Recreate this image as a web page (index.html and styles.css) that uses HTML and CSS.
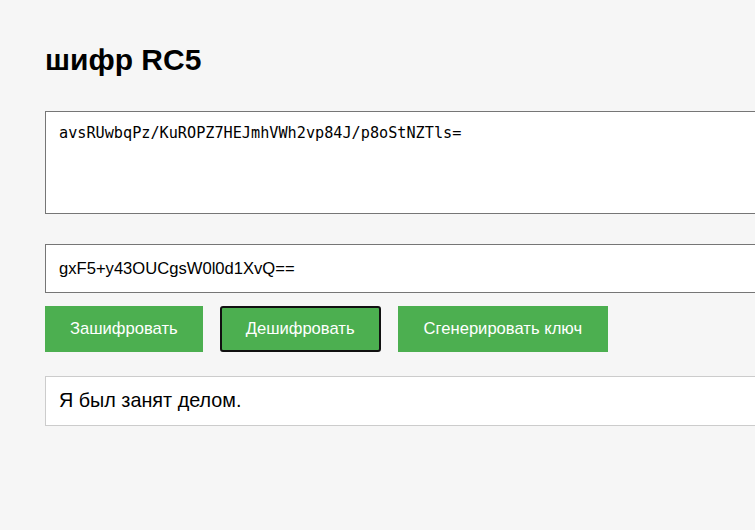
FILE: index.html
```html
<!DOCTYPE html>
<html lang="ru">
<head>
<meta charset="utf-8">
<title>шифр RC5</title>
<link rel="stylesheet" href="styles.css">
</head>
<body>
<main class="page">
  <h1 class="title">шифр RC5</h1>
  <textarea class="message">avsRUwbqPz/KuROPZ7HEJmhVWh2vp84J/p8oStNZTls=</textarea>
  <input class="key" type="text" value="gxF5+y43OUCgsW0l0d1XvQ==">
  <div class="actions">
    <button class="btn">Зашифровать</button>
    <button class="btn btn-focused">Дешифровать</button>
    <button class="btn btn-wide">Сгенерировать ключ</button>
  </div>
  <div class="result">Я был занят делом.</div>
</main>
</body>
</html>
```
FILE: styles.css
```css
html, body {
  margin: 0;
  padding: 0;
  background: #f6f6f6;
  overflow: hidden;
}
body {
  font-family: "Liberation Sans", Arial, sans-serif;
  color: #000;
}
.page {
  width: 800px;
  padding: 20px 0 0 45px;
  display: flex;
  flex-direction: column;
}
.title {
  font-size: 30px;
  font-weight: bold;
  margin: 24px 0 35px 0;
  line-height: 32px;
}
.message {
  box-sizing: border-box;
  width: 800px;
  height: 103px;
  border: 1px solid #767676;
  background: #fff;
  font-family: "DejaVu Sans Mono", "Liberation Mono", monospace;
  font-size: 15.2px;
  padding: 12px 13px;
  resize: none;
  margin: 0 0 30px 0;
  outline: none;
}
.key {
  box-sizing: border-box;
  width: 800px;
  height: 49px;
  border: 1px solid #767676;
  background: #fff;
  font-family: "Liberation Sans", Arial, sans-serif;
  font-size: 16.6px;
  padding: 0 13px;
  margin: 0 0 13px 0;
  outline: none;
}
.actions {
  display: flex;
  gap: 17px;
  margin-bottom: 24px;
}
.btn {
  box-sizing: border-box;
  height: 46px;
  background: #4caf50;
  color: #fff;
  border: none;
  font-family: "Liberation Sans", Arial, sans-serif;
  font-size: 16.6px;
  padding: 0 25px;
}
.btn-focused {
  border: 2px solid #111;
  border-radius: 3px;
  padding: 0 24px;
}
.btn-wide {
  padding: 0 26px;
}
.result {
  box-sizing: border-box;
  width: 800px;
  height: 50px;
  background: #fff;
  border: 1px solid #cccccc;
  font-size: 19.8px;
  line-height: 23px;
  padding: 12px 13px;
}
```
